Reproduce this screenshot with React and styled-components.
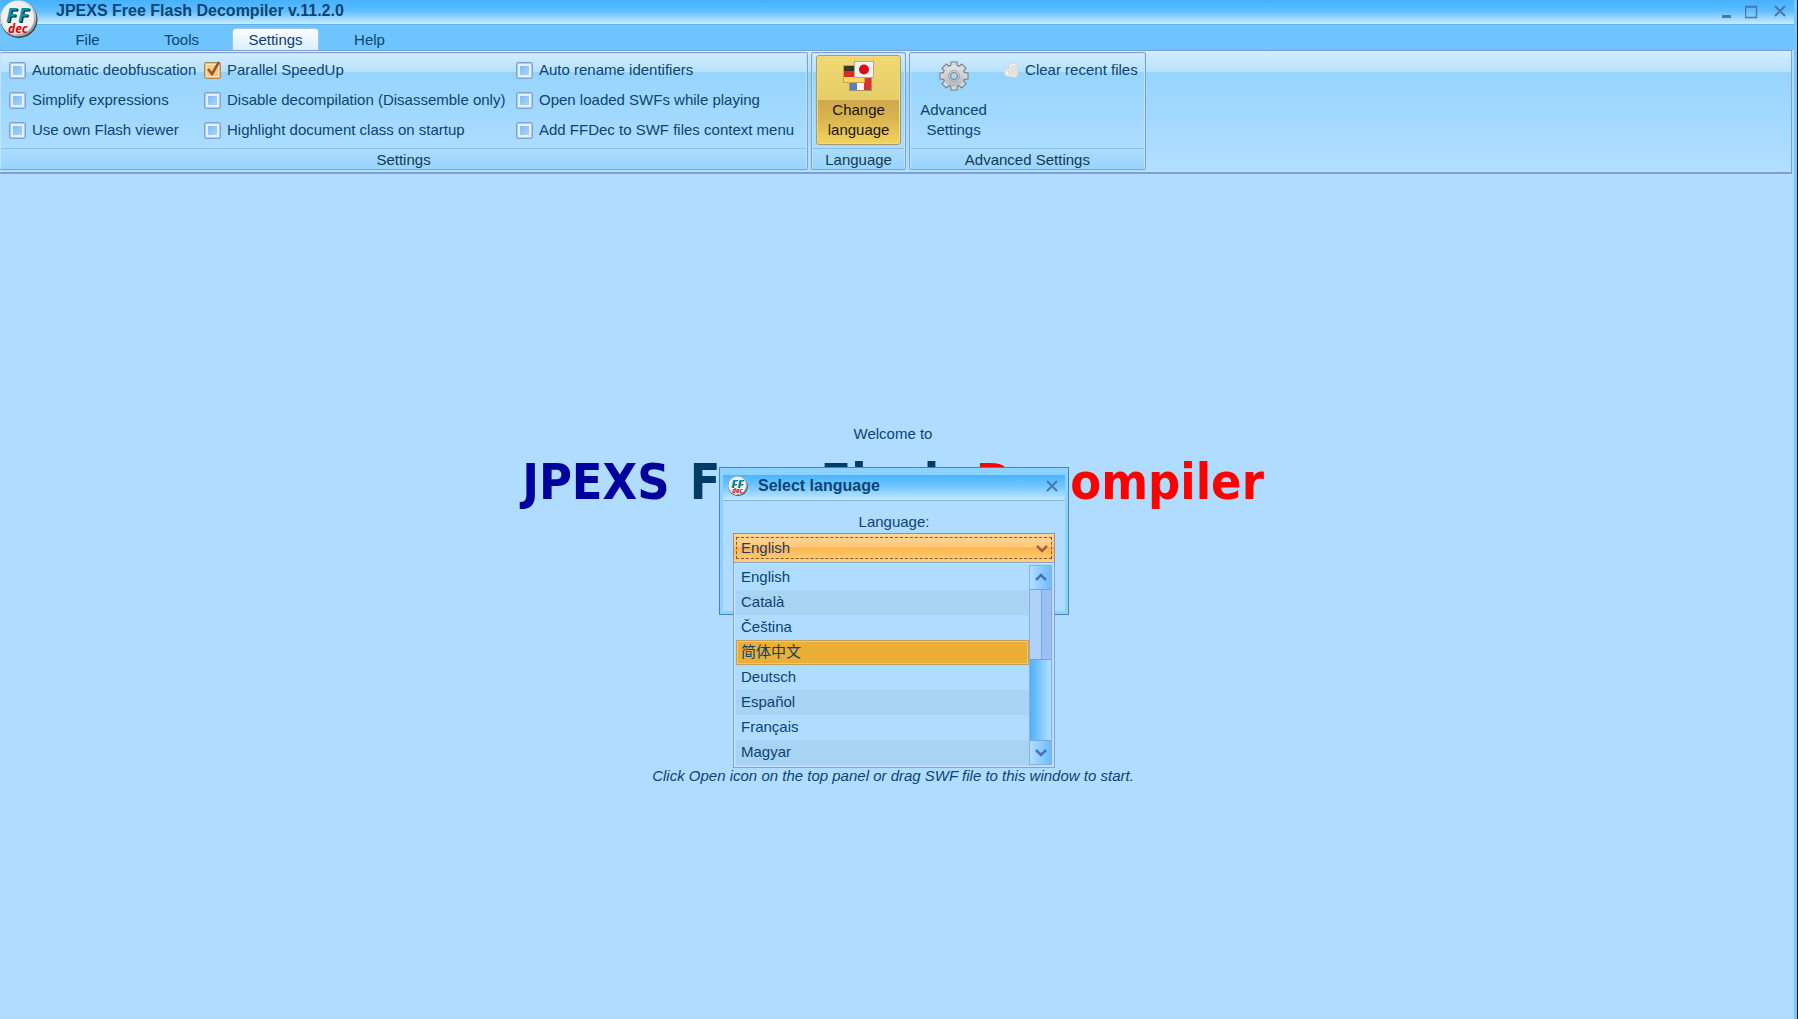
import React from "react";
import styled, { createGlobalStyle } from "styled-components";

const ink = "#0b4470";
const line = "#7f9fd0";
const sky = "#b0ddff";

const GlobalStyle = createGlobalStyle`
  *, *::before, *::after { box-sizing: border-box; }
  body {
    margin: 0;
    background: #14181c;
    color: ${ink};
    font: 15px/20px "Liberation Sans", "Noto Sans CJK SC", Arial, sans-serif;
  }
  button, select, input { font: inherit; color: inherit; margin: 0; padding: 0; }
  button { border: 0; background: none; white-space: nowrap; }
  ul { list-style: none; margin: 0; padding: 0; }
`;

const Window = styled.div`
  position: relative;
  display: flex;
  flex-direction: column;
  min-height: 100vh;
  margin-right: 1px;
  background: ${sky};
  border-right: 3px solid #79c5fb;
  overflow: hidden;
`;

const LogoButton = styled.button`
  position: absolute;
  left: 0;
  top: 0;
  width: 38px;
  height: 38px;
  svg { display: block; }
`;

const TitleBar = styled.header`
  display: flex;
  align-items: center;
  justify-content: space-between;
  height: 24px;
  padding: 0 5px 3px 56px;
  background: linear-gradient(#44b1ff, #5fbdff 45%, #c9ebff);
`;

const Title = styled.h1`
  margin: 0;
  font-size: 16px;
  line-height: 20px;
  font-weight: bold;
`;

const WindowControls = styled.div`
  display: flex;
  gap: 8px;
`;

const ControlButton = styled.button`
  width: 18px;
  height: 18px;
  color: #4a78ab;
  svg { display: block; }
`;

const TabStrip = styled.nav`
  display: flex;
  align-items: flex-end;
  height: 26px;
  padding-left: 44px;
  border-top: 1px solid #62b2ea;
  background: #6ec4fd;
`;

const Tab = styled.button`
  width: ${(p) => p.$width}px;
  height: 22px;
  border-radius: 4px 4px 0 0;
  color: ${(p) => (p.$active ? "#123a78" : ink)};
  background: ${(p) => (p.$active ? "linear-gradient(#fbfdff, #d9efff)" : "none")};
  border: 1px solid ${(p) => (p.$active ? "#9fc3ee" : "transparent")};
  border-bottom: 0;
`;

const Ribbon = styled.section`
  display: flex;
  gap: 3px;
  height: 124px;
  margin-right: 2px;
  padding: 1px 0 2px;
  border: 1px solid ${line};
  border-width: 1px 1px 2px 0;
  background: linear-gradient(#d2edff, #b8e1fa 21px, #96d4fd 21px, #b2dfff);
`;

const Group = styled.div`
  display: flex;
  flex-direction: column;
  border: 1px solid ${line};
  border-radius: 2px;
  border-left-width: ${(p) => (p.$first ? 0 : 1)}px;
  box-shadow: inset 0 0 0 1px #bfe3fd;
`;

const GroupBody = styled.div`
  display: flex;
  flex: 1;
  padding: 2px ${(p) => p.$pad}px;
`;

const GroupCaption = styled.div`
  height: 21px;
  margin: 0 1px;
  padding-top: 1px;
  border-top: 1px solid #8dbfe8;
  color: #17394f;
  text-align: center;
  line-height: 20px;
  background: linear-gradient(#abdcfe, #98d5fd);
`;

const OptionGrid = styled.div`
  display: grid;
  grid-template-columns: 195px 312px auto;
  grid-auto-rows: 30px;
  padding: 0 10px 0 6px;
`;

const Option = styled.label`
  display: flex;
  align-items: center;
  gap: 6px;
  white-space: nowrap;
`;

const CheckHolder = styled.span`
  position: relative;
  display: block;
  width: 17px;
  height: 17px;
  svg {
    position: absolute;
    left: 0;
    bottom: 1px;
    pointer-events: none;
    display: none;
  }
  input:checked + svg { display: block; }
`;

const CheckInput = styled.input`
  appearance: none;
  display: block;
  width: 17px;
  height: 17px;
  border: 1px solid #82a1d2;
  border-radius: 2px;
  background: linear-gradient(135deg, #74b3f4, #b4dcfb);
  box-shadow: inset 0 0 0 1px #a8caf0, inset 0 0 0 3px #e2f2ff;
  &:checked {
    border-color: #b98556;
    background: linear-gradient(135deg, #ffd28b, #ffc069);
    box-shadow: inset 0 0 0 1px #e9b987, inset 0 0 0 2px #ffe6bf;
  }
`;

const BigButton = styled.button`
  display: flex;
  flex-direction: column;
  align-items: center;
  width: 85px;
  height: 90px;
  padding-top: 4px;
  border-radius: 3px;
  border: 1px solid ${(p) => (p.$active ? "#a79a73" : "transparent")};
  color: ${(p) => (p.$active ? "#1b1608" : ink)};
  background: ${(p) =>
    p.$active
      ? "linear-gradient(#f0d873, #e6cd68 44px, #cfa850 44px, #d9b350 70%, #f2d45c)"
      : "none"};
  box-shadow: ${(p) => (p.$active ? "inset 0 0 0 1px #f1dc86" : "none")};
  svg { display: block; margin-bottom: 8px; }
`;

const ButtonText = styled.span`
  width: 70px;
  white-space: normal;
`;

const SmallButton = styled.button`
  display: flex;
  align-items: center;
  gap: 6px;
  height: 30px;
  margin: 0 6px 0 8px;
`;

const Workspace = styled.main`
  position: relative;
  flex: 1;
  display: flex;
  flex-direction: column;
  align-items: center;
  padding: 250px 8px 0 0;
`;

const ProductName = styled.h2`
  display: flex;
  gap: 20px;
  margin: 8px 0 0;
  font: bold 50px/60px "DejaVu Sans Condensed", "DejaVu Sans", Tahoma, sans-serif;
  color: #003c66;
  white-space: nowrap;
`;

const Word = styled.span`
  color: ${(p) => p.$color};
`;

const Hint = styled.p`
  margin: 254px 0 0;
  font-style: italic;
`;

const DialogLayer = styled.div`
  position: absolute;
  inset: 0 6px 0 0;
  display: flex;
  justify-content: center;
  align-items: flex-start;
  padding-top: 293px;
`;

const Dialog = styled.div`
  width: 350px;
  height: 148px;
  padding: 7px 3px 3px;
  border: 1px solid #4585bd;
  background: #8ed3ff;
`;

const DialogBar = styled.div`
  display: flex;
  align-items: center;
  height: 26px;
  padding: 0 4px 3px 5px;
  border-bottom: 1px solid #7db9e0;
  background: linear-gradient(#4bb4ff, #71c5ff 45%, #c3e8ff);
  svg { display: block; }
`;

const DialogTitle = styled.h3`
  flex: 1;
  margin: 0 0 0 10px;
  font-size: 16px;
  line-height: 20px;
`;

const DialogBody = styled.div`
  display: flex;
  flex-direction: column;
  height: 110px;
  padding: 11px 10px 0;
  background: ${sky};
`;

const FieldLabel = styled.label`
  height: 21px;
  text-align: center;
`;

const Combo = styled.div`
  position: relative;
  height: 30px;
  padding: 3px 2px;
  border: 1px solid #a78a84;
  background: linear-gradient(#ffd79a, #ffc87b 45%, #ffb54f 50%, #ffd17a);
`;

const ComboSelect = styled.select`
  appearance: none;
  display: block;
  width: 100%;
  height: 22px;
  padding: 0 4px 1px;
  line-height: 18px;
  border: 1px dashed #7d5a35;
  border-radius: 0;
  background: none;
  color: #273a66;
  outline: none;
`;

const ComboArrow = styled.svg`
  position: absolute;
  right: 6px;
  top: 10px;
  pointer-events: none;
`;

const Popup = styled.div`
  position: absolute;
  left: -1px;
  right: -1px;
  top: 28px;
  display: flex;
  padding: 2px;
  border: 1px solid #8e9fcf;
  background: ${sky};
  box-shadow: inset 0 0 0 1px #c4e3ff;
`;

const LanguageList = styled.ul`
  flex: 1;
`;

const Language = styled.li`
  height: 25px;
  padding: 0 4px;
  line-height: ${(p) => (p.$selected ? 21 : 24)}px;
  border: ${(p) => (p.$selected ? "1px solid #c0a05c" : "0 solid transparent")};
  padding-left: ${(p) => (p.$selected ? 4 : 5)}px;
  background: ${(p) => (p.$selected ? "#ebae36" : p.$striped ? "#a8d3f3" : "transparent")};
  box-shadow: ${(p) => (p.$selected ? "inset 0 0 0 1px #f4c866" : "none")};
`;

const ScrollBar = styled.div`
  display: flex;
  flex-direction: column;
  width: 23px;
  border: 1px solid #8cb0dc;
  background: linear-gradient(90deg, #4cb1ff, #b4e0ff);
`;

const ScrollButton = styled.button`
  display: flex;
  align-items: center;
  justify-content: center;
  height: 23px;
  background: linear-gradient(90deg, #b4ddff, #6bbcff);
`;

const ScrollThumb = styled.div`
  height: 71px;
  border: 1px solid #7e9fd3;
  border-width: 1px 0;
  background: linear-gradient(90deg, #aed2f8 11px, #7fa6dc 11px, #7fa6dc 12px, #9ac1f2 12px);
`;

const ScrollTrack = styled.div`
  flex: 1;
  border-bottom: 1px solid #7fa9d8;
`;

function Logo({ size, id }) {
  return (
    <svg width={size} height={size} viewBox="0 0 38 38" aria-hidden="true">
      <defs>
        <linearGradient id={id} x1="0" y1="0" x2="1" y2="1">
          <stop offset="0" stopColor="#f8f8f8" />
          <stop offset=".5" stopColor="#e2e2e2" />
          <stop offset="1" stopColor="#77797b" />
        </linearGradient>
      </defs>
      <circle cx="19" cy="19.5" r="18.5" fill="#363c42" />
      <circle cx="18.5" cy="18.5" r="18" fill={`url(#${id})`} />
      <circle cx="18.5" cy="18.5" r="15.5" fill="#f1f1f0" />
      <g fontFamily="'Open Sans', sans-serif" fontWeight="bold" fontStyle="italic">
        <text x="7" y="23" fontSize="20" fill="#0a2229">F</text>
        <text x="19" y="23" fontSize="20" fill="#0a2229">F</text>
        <text x="6" y="22" fontSize="20" fill="#0993a8">F</text>
        <text x="18" y="22" fontSize="20" fill="#0993a8">F</text>
        <text x="8" y="33" fontSize="12" fill="#d8000c">dec</text>
      </g>
    </svg>
  );
}

function Gear() {
  const teeth = [0, 45, 90, 135, 180, 225, 270, 315];
  return (
    <svg width="32" height="32" viewBox="0 0 32 32" aria-hidden="true">
      <defs>
        <linearGradient id="steel" x1="0" y1="0" x2="0" y2="1">
          <stop offset="0" stopColor="#e2e5e8" />
          <stop offset="1" stopColor="#b3b7bc" />
        </linearGradient>
      </defs>
      <g fill="#777c82">
        {teeth.map((a) => (
          <path key={a} d="M12 8 12.5 1.5h7L20 8z" transform={`rotate(${a} 16 16)`} />
        ))}
        <circle cx="16" cy="16" r="11.5" />
      </g>
      <g fill="#d6d9dc">
        {teeth.map((a) => (
          <path key={a} d="M13 9 13.5 2.5h5L19 9z" transform={`rotate(${a} 16 16)`} />
        ))}
      </g>
      <circle cx="16" cy="16" r="10.5" fill="url(#steel)" />
      <circle cx="16" cy="16" r="5.5" fill="none" stroke="#a2a7ac" />
      <circle cx="16" cy="16" r="3.5" fill="#a9daf9" stroke="#74797f" />
    </svg>
  );
}

function Flags() {
  return (
    <svg width="32" height="32" viewBox="0 0 32 32" aria-hidden="true">
      <rect x="6.5" y="14.5" width="22" height="16" fill="#f7f7f5" stroke="#a98f66" />
      <rect x="7" y="15" width="7" height="15" fill="#4a83c6" />
      <rect x="21" y="15" width="7" height="15" fill="#e0322a" />
      <rect x="0.5" y="5.5" width="21" height="17" fill="#ffd75c" stroke="#c5a352" />
      <rect x="1" y="6" width="20" height="6" fill="#33363a" />
      <rect x="1" y="11" width="20" height="6" fill="#dc2b22" />
      <rect x="11.5" y="1.5" width="19" height="16" fill="#f6f3ee" stroke="#b8a78d" />
      <circle cx="21" cy="9.5" r="5" fill="#e30613" />
    </svg>
  );
}

function PaperBin() {
  return (
    <svg width="15" height="16" viewBox="0 0 15 16" aria-hidden="true">
      <path d="M5 4 6 1.5 10 1l4 2v10l-2 2H7l-2-3z" fill="#eeece4" stroke="#d3d6d4" />
      <path d="M7 5h6M9 6v7M12 6v7" stroke="#cfd4d3" fill="none" />
      <circle cx="4.5" cy="10.5" r="4" fill="#f3f1ea" stroke="#d1d4d2" />
      <path d="M3 9.5 5 9l1 2-2 1" stroke="#d2c8b4" fill="none" />
    </svg>
  );
}

function Chevron({ up }) {
  return (
    <svg width="12" height="9" viewBox="0 0 12 9" aria-hidden="true">
      <path d={up ? "M1 7l5-5 5 5" : "M1 2l5 5 5-5"} fill="none" stroke="#3f78b3" strokeWidth="2.5" />
    </svg>
  );
}

function CloseGlyph() {
  return (
    <svg width="18" height="18" viewBox="0 0 18 18" aria-hidden="true">
      <path d="M4 4l10 10M14 4L4 14" stroke="currentColor" strokeWidth="2" />
    </svg>
  );
}

const options = [
  ["Automatic deobfuscation"],
  ["Parallel SpeedUp", true],
  ["Auto rename identifiers"],
  ["Simplify expressions"],
  ["Disable decompilation (Disassemble only)"],
  ["Open loaded SWFs while playing"],
  ["Use own Flash viewer"],
  ["Highlight document class on startup"],
  ["Add FFDec to SWF files context menu"],
];

const tabs = [
  ["File", 87],
  ["Tools", 101],
  ["Settings", 87],
  ["Help", 101],
];

const languages = ["English", "Català", "Čeština", "简体中文", "Deutsch", "Español", "Français", "Magyar"];

export default function App() {
  const [hovered, setHovered] = React.useState("简体中文");
  return (
    <>
      <GlobalStyle />
      <Window>
        <TitleBar>
          <Title>JPEXS Free Flash Decompiler v.11.2.0</Title>
          <WindowControls>
            <ControlButton aria-label="Minimize">
              <svg width="18" height="18" viewBox="0 0 18 18"><path d="M3 14.5h9" stroke="currentColor" strokeWidth="3" /></svg>
            </ControlButton>
            <ControlButton aria-label="Maximize">
              <svg width="18" height="18" viewBox="0 0 18 18"><path d="M.5 4.5h11v11H.5zM0 5h12" fill="none" stroke="currentColor" strokeWidth="1.5" /></svg>
            </ControlButton>
            <ControlButton aria-label="Close"><CloseGlyph /></ControlButton>
          </WindowControls>
        </TitleBar>
        <TabStrip>
          {tabs.map(([name, width]) => (
            <Tab key={name} $width={width} $active={name === "Settings"}>{name}</Tab>
          ))}
        </TabStrip>
        <LogoButton aria-label="Application menu"><Logo size={38} id="rim" /></LogoButton>

        <Ribbon>
          <Group $first>
            <GroupBody $pad={3}>
              <OptionGrid>
                {options.map(([label, checked]) => (
                  <Option key={label}>
                    <CheckHolder>
                      <CheckInput type="checkbox" defaultChecked={!!checked} />
                      <svg width="18" height="18" viewBox="0 0 18 18">
                        <path d="M4 9l4 5 7-12" fill="none" stroke="#8a5a30" strokeWidth="2.5" />
                      </svg>
                    </CheckHolder>
                    {label}
                  </Option>
                ))}
              </OptionGrid>
            </GroupBody>
            <GroupCaption>Settings</GroupCaption>
          </Group>
          <Group>
            <GroupBody $pad={4}>
              <BigButton $active><Flags /><ButtonText>Change language</ButtonText></BigButton>
            </GroupBody>
            <GroupCaption>Language</GroupCaption>
          </Group>
          <Group>
            <GroupBody $pad={1}>
              <BigButton><Gear /><ButtonText>Advanced Settings</ButtonText></BigButton>
              <SmallButton><PaperBin />Clear recent files</SmallButton>
            </GroupBody>
            <GroupCaption>Advanced Settings</GroupCaption>
          </Group>
        </Ribbon>

        <Workspace>
          <div>Welcome to</div>
          <ProductName>
            <Word $color="#00009c">JPEXS</Word>
            <Word>Free</Word>
            <Word>Flash</Word>
            <Word $color="#ff0000">Decompiler</Word>
          </ProductName>
          <Hint>Click Open icon on the top panel or drag SWF file to this window to start.</Hint>

          <DialogLayer>
            <Dialog role="dialog" aria-labelledby="dialog-title">
              <DialogBar>
                <Logo size={20} id="rim-small" />
                <DialogTitle id="dialog-title">Select language</DialogTitle>
                <ControlButton aria-label="Close dialog"><CloseGlyph /></ControlButton>
              </DialogBar>
              <DialogBody>
                <FieldLabel htmlFor="language">Language:</FieldLabel>
                <Combo>
                  <ComboSelect id="language" defaultValue="English">
                    {languages.map((l) => <option key={l}>{l}</option>)}
                  </ComboSelect>
                  <ComboArrow width="12" height="9" viewBox="0 0 12 9">
                    <path d="M1 2l5 5 5-5" fill="none" stroke="#93664a" strokeWidth="2.5" />
                  </ComboArrow>
                  <Popup>
                    <LanguageList role="listbox" aria-label="Languages">
                      {languages.map((l, i) => (
                        <Language
                          key={l}
                          role="option"
                          aria-selected={l === hovered}
                          $selected={l === hovered}
                          $striped={i % 2 === 1}
                          onMouseEnter={() => setHovered(l)}
                        >
                          {l}
                        </Language>
                      ))}
                    </LanguageList>
                    <ScrollBar>
                      <ScrollButton aria-label="Scroll up"><Chevron up /></ScrollButton>
                      <ScrollThumb />
                      <ScrollTrack />
                      <ScrollButton aria-label="Scroll down"><Chevron /></ScrollButton>
                    </ScrollBar>
                  </Popup>
                </Combo>
              </DialogBody>
            </Dialog>
          </DialogLayer>
        </Workspace>
      </Window>
    </>
  );
}
